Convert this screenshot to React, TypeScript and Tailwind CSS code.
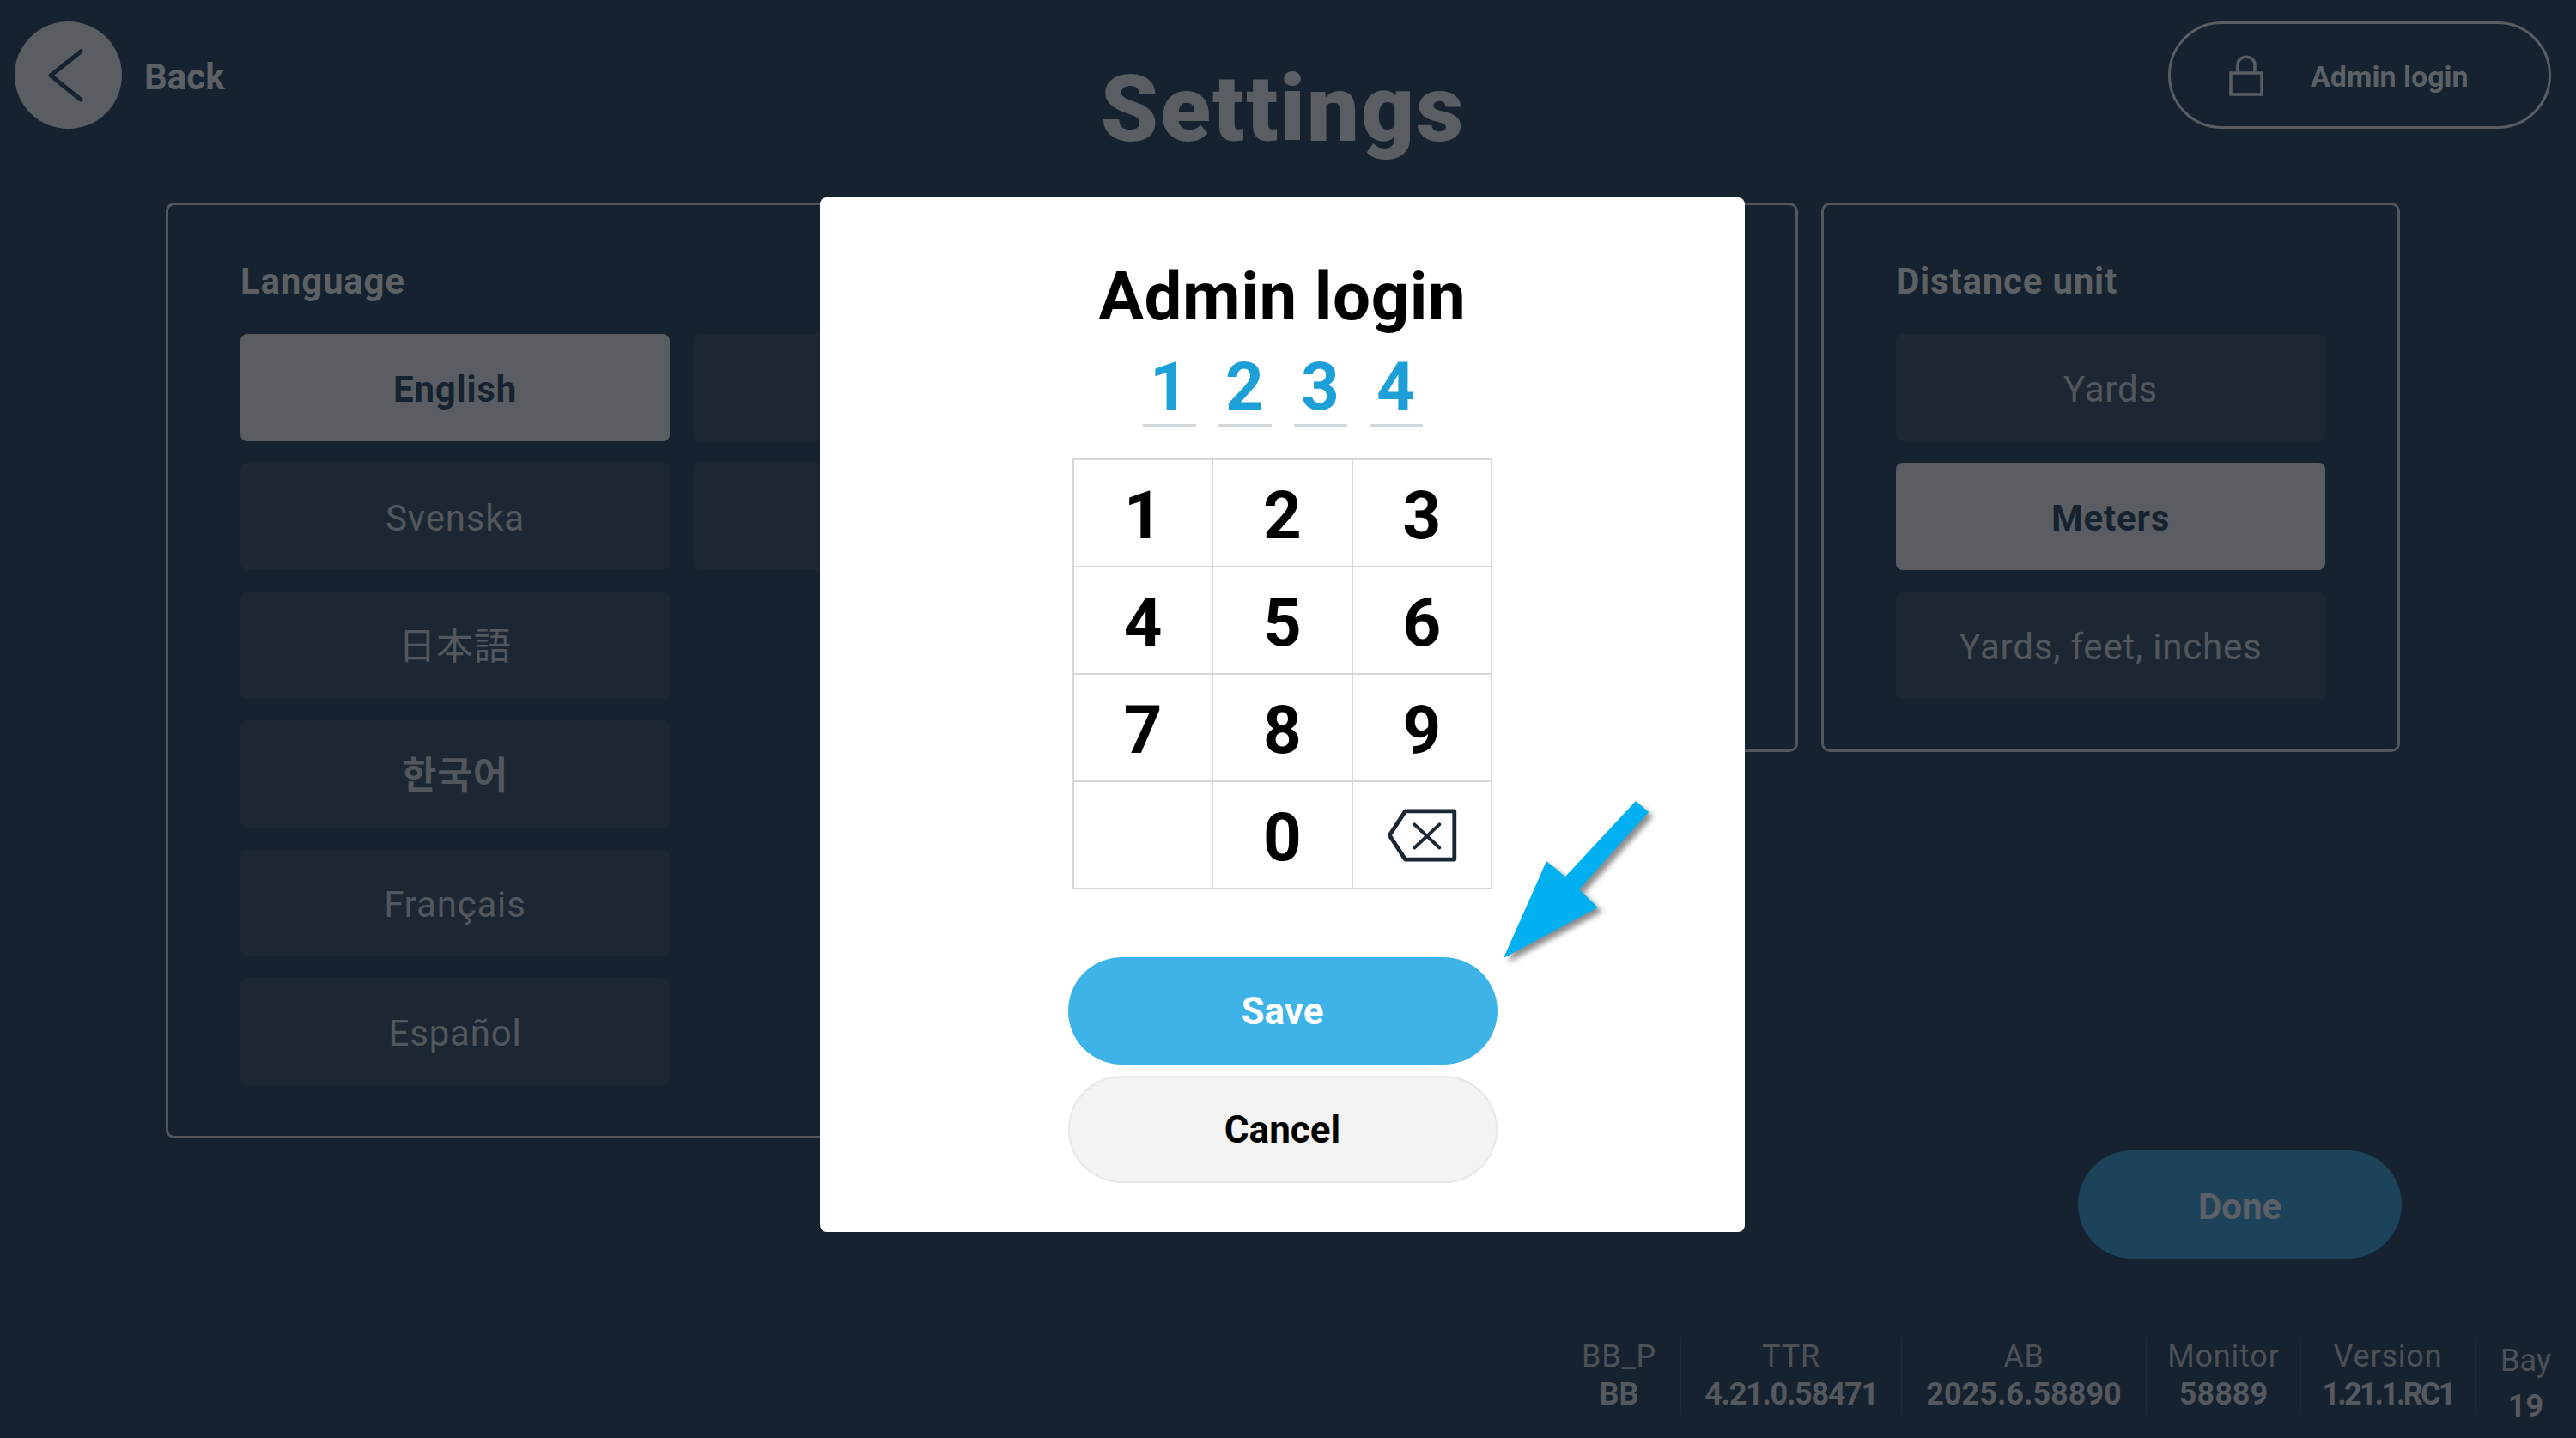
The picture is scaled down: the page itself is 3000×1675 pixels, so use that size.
const stack = "font-['Roboto','Noto_Sans_CJK_JP','Noto_Sans_CJK_KR',sans-serif]";

const OptionButton = ({ label, selected, className }: { label: string; selected?: boolean; className?: string }) => (
  <div
    className={
      (selected
        ? "bg-[#5a5e63] font-bold text-[#16222f] "
        : "bg-[#1c2733] text-[#53575d] ") +
      "w-[500px] h-[125px] pt-[4px] rounded-[8px] flex items-center justify-center tracking-[0.8px] " +
      (className ?? "text-[42px]")
    }
  >
    {label}
  </div>
);

const Panel = ({ title, children, className }: { title?: string; children?: React.ReactNode; className: string }) => (
  <section className={"rounded-[10px] border-[3px] border-[#53575d] px-[84px] " + className}>
    {title && <h2 className="h-[150px] pt-[61px] text-[42px] leading-[56px] font-bold tracking-[0.8px] text-[#5d6166]">{title}</h2>}
    {children}
  </section>
);

const Info = ({ label, value, width, valueClass }: { label: string; value: string; width: string; valueClass?: string }) => (
  <div className={width + " h-[89px] flex flex-col items-center border-r border-[#1e2a37]"}>
    <div className="text-[36px] leading-[44px] tracking-[0.8px] text-[#4d5157]">{label}</div>
    <div className={"text-[36px] leading-[44px] font-bold text-[#55595f] " + (valueClass ?? "")}>{value}</div>
  </div>
);

const Key = ({ children }: { children?: React.ReactNode }) => (
  <div className="h-[125px] flex items-center justify-center border-[1.5px] border-[#d5d8db] text-[78px] font-bold text-black">
    {children}
  </div>
);

const App = () => {
  return (
    <div className={"relative w-[3000px] h-[1675px] overflow-hidden bg-[#16222f] " + stack}>
      {/* header */}
      <header className="h-[236px] pt-[25px] pl-[17px] pr-[29px] grid grid-cols-[1fr_auto_1fr] items-start">
        <div className="flex items-center gap-[26px]">
          <div className="w-[125px] h-[125px] rounded-full bg-[#5a5e63] flex items-center justify-center">
            <svg className="mr-[6px]" width="44" height="62" viewBox="0 0 44 62" fill="none" stroke="#16222f" strokeWidth="5" strokeLinecap="round" strokeLinejoin="round">
              <path d="M39 3 L4 31 L39 59" />
            </svg>
          </div>
          <span className="pt-[4px] text-[42px] font-bold text-[#5d6166]">Back</span>
        </div>
        <h1 className="mt-[47px] text-[108px] leading-[110px] font-black tracking-[2px] text-[#5a5e63]">Settings</h1>
        <div className="justify-self-end w-[446px] h-[125px] rounded-full border-[3px] border-[#5a5e63] flex items-center pl-[68px]">
          <svg width="40" height="48" viewBox="0 0 40 48" fill="none" stroke="#5a5e63" strokeWidth="3.5">
            <path d="M2 21 H38 V46 H2 Z" />
            <path d="M10 21 V12 C10 -1 30 -1 30 12 V21" />
          </svg>
          <span className="ml-[55px] pt-[4px] text-[34px] font-bold text-[#5d6166]">Admin login</span>
        </div>
      </header>

      {/* panels */}
      <main className="pl-[193px] flex items-start gap-[27px]">
        <Panel title="Language" className="w-[1201px] h-[1090px]">
          <div className="grid grid-cols-[500px_500px] gap-x-[27px] gap-y-[25px]">
            <OptionButton label="English" selected />
            <OptionButton label="" />
            <OptionButton label="Svenska" />
            <OptionButton label="" />
            <OptionButton label="日本語" className="text-[43px]" />
            <div />
            <OptionButton label="한국어" className="text-[44px] font-semibold" />
            <div />
            <OptionButton label="Français" />
            <div />
            <OptionButton label="Español" />
          </div>
        </Panel>
        <Panel className="w-[673px] h-[640px]" />
        <Panel title="Distance unit" className="w-[674px] h-[640px]">
          <div className="flex flex-col gap-[25px]">
            <OptionButton label="Yards" />
            <OptionButton label="Meters" selected />
            <OptionButton label="Yards, feet, inches" />
          </div>
        </Panel>
      </main>

      <div className="mt-[14px] pr-[203px] flex justify-end">
        <div className="w-[377px] h-[126px] pt-[4px] rounded-full bg-[#1c4359] flex items-center justify-center text-[42px] font-bold text-[#5c6066]">Done</div>
      </div>

      {/* version info */}
      <footer className="mt-[92px] pl-[1814px] flex">
        <Info width="w-[144px]" label="BB_P" value="BB" />
        <Info width="w-[257px]" label="TTR" value="4.21.0.58471" valueClass="tracking-[-1.3px]" />
        <Info width="w-[285px]" label="AB" value="2025.6.58890" />
        <Info width="w-[180px]" label="Monitor" value="58889" />
        <Info width="w-[203px]" label="Version" value="1.21.1.RC1" valueClass="tracking-[-2.8px]" />
        <div className="w-[117px] flex flex-col items-center">
          <div className="mt-[5px] text-[36px] leading-[44px] text-[#4d5157]">Bay</div>
          <div className="mt-[9px] text-[36px] leading-[44px] font-bold text-[#55595f]">19</div>
        </div>
      </footer>

      {/* admin login dialog */}
      <div className="absolute left-[955px] top-[230px] w-[1077px] h-[1205px] rounded-[8px] bg-white flex flex-col items-center">
        <h2 className="mt-[74px] text-[78px] leading-[84px] font-bold tracking-[0.6px] text-black">Admin login</h2>
        <div className="mt-[24px] flex gap-[26px]">
          {["1", "2", "3", "4"].map((d) => (
            <div key={d} className="w-[62px] h-[85px] border-b-[3px] border-[#d5d8db] text-center text-[78px] leading-[78px] font-bold text-[#1d9fd8]">
              {d}
            </div>
          ))}
        </div>
        <div className="mt-[37px] w-[489px] grid grid-cols-3 border-[1.5px] border-[#d5d8db]">
          {["1", "2", "3", "4", "5", "6", "7", "8", "9"].map((d) => (
            <Key key={d}>
              <span className="pt-[5px]">{d}</span>
            </Key>
          ))}
          <Key />
          <Key>
            <span className="pt-[5px]">0</span>
          </Key>
          <Key>
            <svg width="82" height="62" viewBox="0 0 84 64" fill="none" stroke="#1c2735" strokeWidth="5" strokeLinejoin="round" strokeLinecap="round">
              <path d="M3 32 L22 3 H81 V61 H22 Z" />
              <path d="M33 19 L63 47 M63 19 L33 47" strokeWidth="4" />
            </svg>
          </Key>
        </div>
        <div className="mt-[79px] w-[500px] h-[125px] rounded-full bg-[#3eb3e8] flex items-center justify-center text-[44px] font-bold text-white">Save</div>
        <div className="mt-[13px] w-[500px] h-[125px] rounded-full bg-[#f3f3f3] border-[2px] border-[#e8e8e8] flex items-center justify-center text-[44px] font-bold text-black">Cancel</div>
      </div>

      {/* callout arrow */}
      <svg className="absolute left-[1740px] top-[925px] drop-shadow-[5px_5px_3px_rgba(0,0,0,0.45)]" width="190" height="200" viewBox="1740 925 190 200">
        <path d="M1905 933 L1920 946 L1839 1036 L1861 1057 L1751 1116 L1801 1003 L1823 1021 Z" fill="#00b0f0" />
      </svg>
    </div>
  );
};

export default App;
